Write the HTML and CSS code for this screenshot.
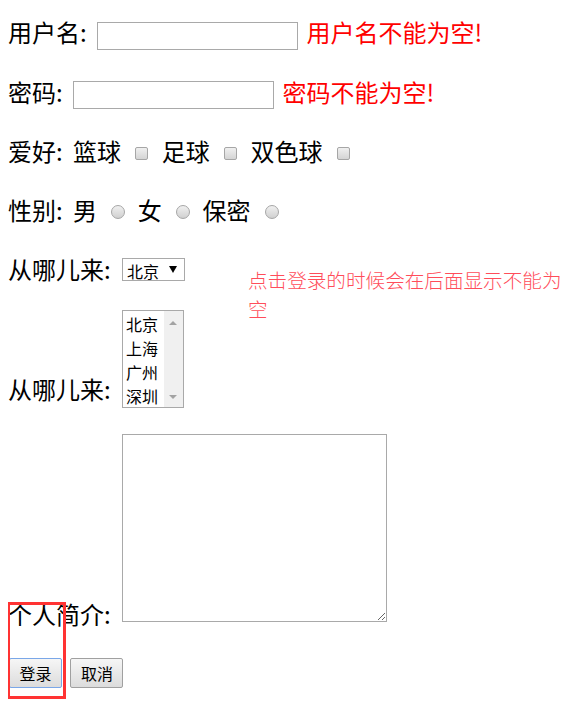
FILE: index.html
```html
<!DOCTYPE html>
<html lang="zh-CN">
<head>
  <meta charset="UTF-8" />
  <title>注册</title>
  <link rel="stylesheet" href="styles.css">
</head>
<body>
  <form class="reg" onsubmit="return false">
    <p class="row">用户名: <input type="text" class="field" /> <span class="err">用户名不能为空!</span></p>
    <p class="row">密码: <input type="password" class="field" /> <span class="err">密码不能为空!</span></p>
    <p class="row">爱好: 篮球 <input type="checkbox" class="box" /> 足球 <input type="checkbox" class="box" /> 双色球 <input type="checkbox" class="box" /></p>
    <p class="row">性别: 男 <input type="radio" name="sex" class="dot" /> 女 <input type="radio" name="sex" class="dot" /> 保密 <input type="radio" name="sex" class="dot" /></p>
    <p class="row"><span class="tip">点击登录的时候会在后面显示不能为空</span>从哪儿来: <span class="drop"><select class="pick">
      <option>北京</option>
      <option>上海</option>
      <option>广州</option>
      <option>深圳</option>
    </select></span></p>
    <p class="row row-list">从哪儿来: <span class="list" role="listbox"><span class="list-in">
      <span class="opts">
        <span class="opt">北京</span>
        <span class="opt">上海</span>
        <span class="opt">广州</span>
        <span class="opt">深圳</span>
      </span>
      <span class="bar"><i class="up"></i><i class="down"></i></span>
    </span></span></p>
    <p class="row row-intro">个人简介: <textarea class="intro"></textarea></p>
    <p class="row btns"><span class="mark"></span><button class="btn on">登录</button> <button class="btn">取消</button></p>
  </form>
</body>
</html>
```

FILE: styles.css
```css
body {
  margin: 14px 8px 8px;
  font-family: "Noto Sans CJK SC", "Liberation Sans", sans-serif;
  color: #000;
  background: #fff;
}
.reg {
  margin: 0;
}
.row {
  margin: 0 0 24px;
  font-size: 24px;
  line-height: 35px;
  word-spacing: 5px;
}
.row-list {
  margin-bottom: 26px;
}
.row-intro {
  margin-bottom: 27px;
}
.field {
  box-sizing: border-box;
  width: 201px;
  height: 28px;
  margin: 0 -2px 0 0;
  padding: 1px 3px;
  border: 1px solid #a9a9a9;
  font-size: 13px;
  vertical-align: 2px;
}
.err {
  color: #f00;
}
.box {
  -webkit-appearance: none;
  appearance: none;
  box-sizing: border-box;
  width: 13px;
  height: 13px;
  margin: 0 3px 0 4px;
  border: 1px solid #a6a6a6;
  border-radius: 2px;
  background: linear-gradient(#f0f0f0, #d4d4d4);
  vertical-align: 1px;
}
.dot {
  -webkit-appearance: none;
  appearance: none;
  box-sizing: border-box;
  width: 14px;
  height: 14px;
  margin: 0 2px 0 4px;
  border: 1px solid #a6a6a6;
  border-radius: 50%;
  background: linear-gradient(#f0f0f0, #d0d0d0);
  vertical-align: 1px;
}
.tip {
  float: right;
  width: 320px;
  margin: 14px -8px 0 0;
  font-size: 19.6px;
  line-height: 29px;
  word-spacing: 0;
  font-weight: 300;
  color: #ff4d5a;
}
.drop {
  position: relative;
  display: inline-block;
  margin-left: 1px;
  vertical-align: 1px;
}
.pick {
  -webkit-appearance: none;
  appearance: none;
  box-sizing: border-box;
  display: block;
  width: 63px;
  height: 23px;
  padding: 0 0 0 4px;
  border: 1px solid #a9a9a9;
  border-radius: 0;
  background: #fff;
  font-family: "Noto Sans CJK SC", sans-serif;
  font-size: 16px;
  color: #000;
}
.drop::after {
  content: "";
  position: absolute;
  right: 8px;
  top: 8px;
  border-left: 4px solid transparent;
  border-right: 4px solid transparent;
  border-top: 7px solid #000;
  pointer-events: none;
}
.list {
  display: inline-block;
  box-sizing: border-box;
  width: 62px;
  height: 98px;
  margin-left: 1px;
  border: 1px solid #a9a9a9;
  overflow: hidden;
  vertical-align: -9px;
  word-spacing: 0;
}
.list-in {
  display: flex;
  height: 100%;
}
.opts {
  display: flex;
  flex-direction: column;
  flex: 1;
  padding: 1px 0 0 3px;
  font-size: 16px;
  line-height: 24px;
}
.bar {
  position: relative;
  width: 19px;
  background: #f0f0f0;
}
.up, .down {
  position: absolute;
  left: 5px;
  border-left: 4px solid transparent;
  border-right: 4px solid transparent;
}
.up {
  top: 10px;
  border-bottom: 4px solid #a3a3a3;
}
.down {
  bottom: 8px;
  border-top: 4px solid #a3a3a3;
}
.intro {
  box-sizing: border-box;
  width: 265px;
  height: 188px;
  margin: 0 0 0 1px;
  border: 1px solid #a9a9a9;
  vertical-align: 2px;
  resize: both;
}
.btns {
  position: relative;
  line-height: 30px;
  word-spacing: 2px;
}
.btn {
  box-sizing: border-box;
  width: 53px;
  height: 30px;
  margin: 0 0 0 1px;
  padding: 0;
  border: 1px solid #a0a0a0;
  border-radius: 2px;
  background: linear-gradient(#f6f6f6, #dcdcdc);
  font-family: "Noto Sans CJK SC", sans-serif;
  font-size: 16px;
  color: #000;
  vertical-align: top;
}
.btn.on {
  border-color: #7aa7e8;
}
.mark {
  position: absolute;
  left: -1px;
  top: -56px;
  width: 53px;
  height: 91px;
  border: 3px solid #f33;
}
```
